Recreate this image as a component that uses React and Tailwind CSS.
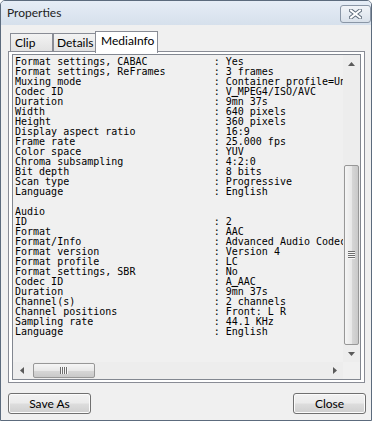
import React from "react";

const rows = [
  ["Format settings, CABAC", "Yes"],
  ["Format settings, ReFrames", "3 frames"],
  ["Muxing mode", "Container profile=Unknown@0.0"],
  ["Codec ID", "V_MPEG4/ISO/AVC"],
  ["Duration", "9mn 37s"],
  ["Width", "640 pixels"],
  ["Height", "360 pixels"],
  ["Display aspect ratio", "16:9"],
  ["Frame rate", "25.000 fps"],
  ["Color space", "YUV"],
  ["Chroma subsampling", "4:2:0"],
  ["Bit depth", "8 bits"],
  ["Scan type", "Progressive"],
  ["Language", "English"],
  null,
  ["Audio"],
  ["ID", "2"],
  ["Format", "AAC"],
  ["Format/Info", "Advanced Audio Codec"],
  ["Format version", "Version 4"],
  ["Format profile", "LC"],
  ["Format settings, SBR", "No"],
  ["Codec ID", "A_AAC"],
  ["Duration", "9mn 37s"],
  ["Channel(s)", "2 channels"],
  ["Channel positions", "Front: L R"],
  ["Sampling rate", "44.1 KHz"],
  ["Language", "English"],
];

function Arrow({ dir }) {
  const pts = {
    up: "0,4 3.5,0 7,4",
    down: "0,0 7,0 3.5,4",
    left: "4,0 4,7 0,3.5",
    right: "0,0 0,7 4,3.5",
  }[dir];
  const vert = dir === "up" || dir === "down";
  return (
    <svg width={vert ? 7 : 4} height={vert ? 4 : 7} viewBox={vert ? "0 0 7 4" : "0 0 4 7"}>
      <polygon points={pts} fill="#5a5a5a" />
    </svg>
  );
}

function Line({ text }) {
  const parts = text.split("_");
  return (
    <div className="h-[10px]">
      {parts.map((p, i) => (
        <React.Fragment key={i}>
          {i > 0 && (
            <span className="relative -top-[1px] [-webkit-text-stroke:0.7px_#000]">_</span>
          )}
          {p}
        </React.Fragment>
      ))}
    </div>
  );
}

const btnBg =
  "bg-[linear-gradient(to_bottom,#f2f2f2_0%,#ebebeb_48%,#dddddd_52%,#cfcfcf_100%)]";

export default function App() {
  const lines = rows.map((r) =>
    r === null ? " " : r.length === 1 ? r[0] : r[0].padEnd(33) + ": " + r[1]
  );
  return (
    <div
      className="w-[374px] h-[421px] bg-white overflow-hidden"
      style={{ fontFamily: "Lato, 'Noto Sans', sans-serif" }}
    >
      <div className="w-[372px] h-[421px] flex flex-col border border-[#5c6b7d] rounded-t-[5px] bg-[#f0f0f0] overflow-hidden">
        {/* title bar */}
        <div className="h-[24px] flex items-start justify-between bg-gradient-to-b from-[#e6edf6] to-[#d6e0ec]">
          <span className="pl-[6px] pt-[4px] text-[12px] leading-[16px] text-[#222]">
            Properties
          </span>
          <div className="mt-[4px] w-[31px] h-[18px] rounded-[3px] border border-[#8a96a6] bg-gradient-to-b from-[#f1f4f8] to-[#d9e1ea] flex items-center justify-center">
            <svg width="13" height="10" viewBox="0 0 13 10">
              <path d="M2 1.5 L11 8.5 M11 1.5 L2 8.5" stroke="#5f6c7b" strokeWidth="4" strokeLinecap="square" />
              <path d="M2 1.5 L11 8.5 M11 1.5 L2 8.5" stroke="#ffffff" strokeWidth="2" strokeLinecap="square" />
            </svg>
          </div>
        </div>

        {/* client */}
        <div className="flex flex-col pl-[7px] pr-[5px] pt-[6px]">
          {/* tabs */}
          <div className="h-[20px] flex items-end pl-[2px] text-[12px] leading-[16px] text-black">
            <div className="w-[43px] h-[18px] border border-b-0 border-[#898c95] pl-[4px] pt-[1px] bg-gradient-to-b from-[#f3f3f3] to-[#e2e2e2]">
              Clip
            </div>
            <div className="w-[43px] h-[18px] border border-b-0 border-[#898c95] pl-[3px] pt-[1px] bg-gradient-to-b from-[#f3f3f3] to-[#e2e2e2]">
              Details
            </div>
            <div className="relative z-10 -ml-[1px] -mb-[2px] w-[63px] h-[22px] border border-b-0 border-[#898c95] pl-[5px] pt-[1px] bg-white">
              MediaInfo
            </div>
          </div>

          {/* panel */}
          <div className="w-[357px] h-[332px] border border-[#898c95] bg-white px-[3px] py-[2px]">
            <div className="w-full h-full border border-[#828790] bg-[#f0f0f0] flex flex-col">
              <div className="h-[307px] flex">
                <div
                  className="flex-1 overflow-hidden pl-[2px] pt-[2px] text-[10px] leading-[10px] text-black whitespace-pre"
                  style={{ fontFamily: "'DejaVu Sans Mono', 'Liberation Mono', monospace" }}
                >
                  {lines.map((l, i) => (
                    <Line key={i} text={l} />
                  ))}
                </div>
                {/* vertical scrollbar */}
                <div className="w-[17px] flex flex-col bg-[#ededed]">
                  <div className="h-[17px] flex items-center justify-center">
                    <Arrow dir="up" />
                  </div>
                  <div className="flex-1 flex flex-col">
                    <div className="flex-1" />
                    <div className="h-[180px] mx-[1px] rounded-[2px] border border-[#979797] bg-[linear-gradient(to_right,#f5f5f5_0%,#e8e8e8_50%,#d6d6d6_55%,#c9c9c9_100%)] flex items-center justify-center">
                      <svg width="7" height="8" viewBox="0 0 7 8">
                        <path d="M0 0.5H7M0 2.5H7M0 4.5H7M0 6.5H7" stroke="#6e6e6e" strokeWidth="1" />
                        <path d="M0 1.5H7M0 3.5H7M0 5.5H7M0 7.5H7" stroke="#f8f8f8" strokeWidth="1" />
                      </svg>
                    </div>
                  </div>
                  <div className="h-[17px] flex items-center justify-center">
                    <Arrow dir="down" />
                  </div>
                </div>
              </div>
              {/* horizontal scrollbar row */}
              <div className="h-[17px] flex">
                <div className="flex-1 flex bg-[#ededed]">
                  <div className="w-[17px] flex items-center justify-center">
                    <Arrow dir="left" />
                  </div>
                  <div className="flex-1 flex">
                    <div className="ml-[3px] mt-[1px] w-[62px] h-[15px] rounded-[2px] border border-[#979797] bg-[linear-gradient(to_bottom,#f5f5f5_0%,#e8e8e8_50%,#d6d6d6_55%,#c9c9c9_100%)] flex items-center justify-center">
                      <svg width="8" height="7" viewBox="0 0 8 7">
                        <path d="M0.5 0V7M2.5 0V7M4.5 0V7M6.5 0V7" stroke="#6e6e6e" strokeWidth="1" />
                        <path d="M1.5 0V7M3.5 0V7M5.5 0V7M7.5 0V7" stroke="#f8f8f8" strokeWidth="1" />
                      </svg>
                    </div>
                  </div>
                  <div className="w-[17px] flex items-center justify-center">
                    <Arrow dir="right" />
                  </div>
                </div>
                <div className="w-[17px] bg-[#f0f0f0]" />
              </div>
            </div>
          </div>

          {/* buttons */}
          <div className="mt-[10px] flex justify-between text-[12px] text-black">
            <button className={"w-[83px] h-[21px] rounded-[3px] border border-[#707070] shadow-[inset_0_0_0_1px_#fbfbfb] leading-[18px] " + btnBg}>
              Save As
            </button>
            <button className={"w-[73px] h-[21px] rounded-[3px] border border-[#707070] shadow-[inset_0_0_0_1px_#fbfbfb] leading-[18px] " + btnBg}>
              Close
            </button>
          </div>
        </div>
      </div>
    </div>
  );
}
